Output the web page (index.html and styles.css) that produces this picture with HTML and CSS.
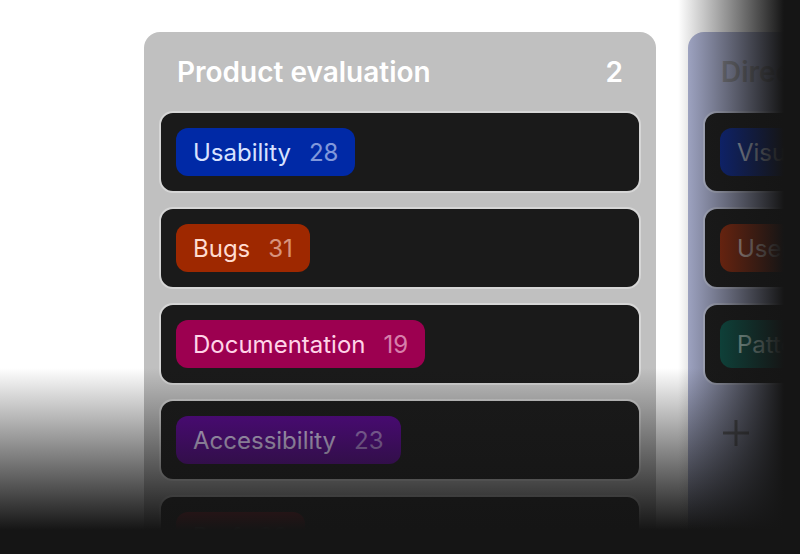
FILE: index.html
```html
<!DOCTYPE html>
<html>
<head>
<meta charset="utf-8">
<link rel="stylesheet" href="styles.css">
</head>
<body>
<div class="stage">
  <div class="board">
    <section class="column column-main">
      <header class="col-head">
        <span class="col-title">Product evaluation</span>
        <span class="col-count">2</span>
      </header>
      <div class="cards">
        <div class="card"><span class="tag tag-blue"><span class="tag-label">Usability</span><span class="tag-num">28</span></span></div>
        <div class="card"><span class="tag tag-orange"><span class="tag-label">Bugs</span><span class="tag-num">31</span></span></div>
        <div class="card"><span class="tag tag-pink"><span class="tag-label">Documentation</span><span class="tag-num">19</span></span></div>
        <div class="card"><span class="tag tag-purple"><span class="tag-label">Accessibility</span><span class="tag-num">23</span></span></div>
        <div class="card"><span class="tag tag-red"><span class="tag-label">Perf</span><span class="tag-num">38</span></span></div>
      </div>
    </section>
    <section class="column column-side">
      <header class="col-head">
        <span class="col-title col-title-dim">Direction</span>
      </header>
      <div class="cards">
        <div class="card"><span class="tag tag-blue2"><span class="tag-label">Visual</span><span class="tag-num">12</span></span></div>
        <div class="card"><span class="tag tag-orange2"><span class="tag-label">Users</span><span class="tag-num">9</span></span></div>
        <div class="card"><span class="tag tag-teal"><span class="tag-label">Patterns</span><span class="tag-num">7</span></span></div>
        <div class="add-row">
          <svg class="add-icon" width="28" height="28" viewBox="0 0 28 28"><path d="M14 1V27M1 14H27" stroke="#6a6b72" stroke-width="3" fill="none"/></svg>
        </div>
      </div>
    </section>
  </div>
  <div class="fade fade-bottom"></div>
  <div class="fade fade-right"></div>
</div>
</body>
</html>
```

FILE: styles.css
```css
* { box-sizing: border-box; }
html, body {
  margin: 0;
  padding: 0;
  background: #ffffff;
  font-family: Inter, "Noto Sans", sans-serif;
}
.stage {
  position: relative;
  width: 800px;
  height: 554px;
  overflow: hidden;
}
.board {
  display: flex;
  gap: 32px;
  padding: 32px 0 0 144px;
}
.column {
  flex: 0 0 512px;
  height: 620px;
  border-radius: 16px;
  padding: 0 15px;
}
.column-main { background: #c0c0c0; }
.column-side { background: #abb1d2; }
.col-head {
  height: 79px;
  display: flex;
  align-items: center;
  justify-content: space-between;
  padding: 0 18px 0 18px;
  color: #ffffff;
  font-size: 28px;
  font-weight: 600;
  white-space: nowrap;
}
.col-title-dim { color: #8f9099; }
.cards {
  display: flex;
  flex-direction: column;
  gap: 14px;
}
.card {
  height: 82px;
  background: #1a1a1a;
  border: 2px solid #d6d6d6;
  border-radius: 14px;
  padding: 15px;
  display: flex;
  align-items: flex-start;
}
.column-side .card { border-color: #c4c9e0; }
.tag {
  height: 48px;
  display: inline-flex;
  align-items: center;
  gap: 18px;
  padding: 0 17px;
  border-radius: 12px;
  font-size: 24px;
  font-weight: 400;
  white-space: nowrap;
}
.tag-num { opacity: 0.6; }
.tag-blue { background: #0029a6; color: #d8e2ff; }
.tag-orange { background: #9e2800; color: #ffdcd0; }
.tag-pink { background: #9c0050; color: #ffd4e8; }
.tag-purple { background: #5c0696; color: #e6d4ff; }
.tag-red { background: #a01020; color: #ffd6d6; }
.tag-blue2 { background: #0a2a9c; color: #d8e2ff; }
.tag-orange2 { background: #9a2c0c; color: #ffdcd0; }
.tag-teal { background: #0a5c50; color: #d0fff2; }
.add-row {
  height: 68px;
  display: flex;
  align-items: center;
  padding-left: 19px;
}
.fade {
  position: absolute;
  pointer-events: none;
}
.fade-bottom {
  left: 0;
  right: 0;
  top: 368px;
  bottom: 0;
  background: linear-gradient(to bottom, rgba(21,21,21,0) 0px, rgba(21,21,21,1) 162px);
}
.fade-right {
  top: 0;
  bottom: 0;
  left: 678px;
  right: 0;
  background: linear-gradient(to right, rgba(21,21,21,0) 0px, rgba(21,21,21,1) 106px);
}
```
